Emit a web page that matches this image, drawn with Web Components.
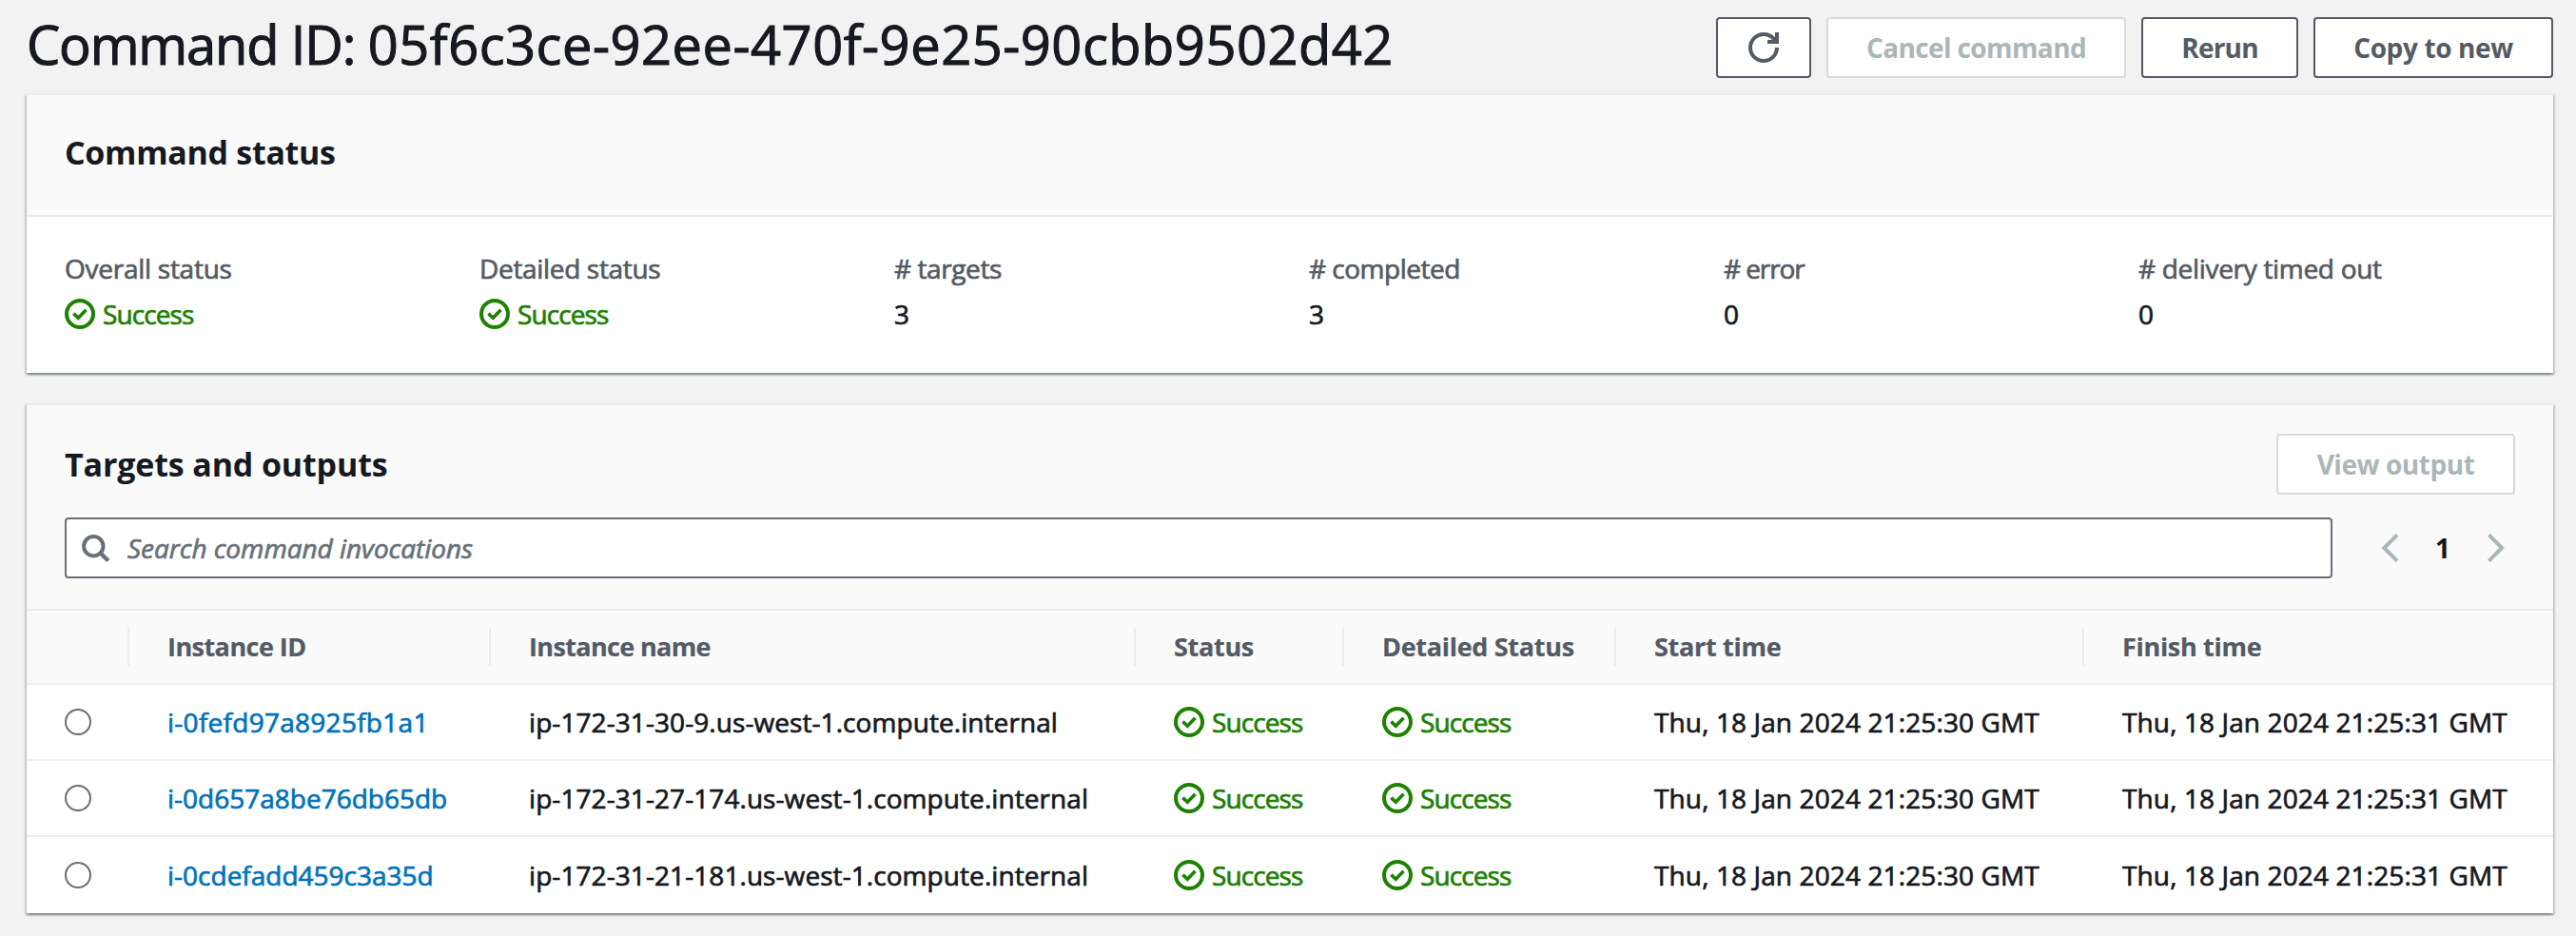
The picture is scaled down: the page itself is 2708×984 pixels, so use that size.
<!DOCTYPE html>
<html lang="en"><head><meta charset="utf-8"><title>Command ID: 05f6c3ce-92ee-470f-9e25-90cbb9502d42</title>
<style>
body{margin:0;background:#f2f2f2;color:#16191f;font:400 28px/44px "Open Sans","Noto Sans",sans-serif;width:2708px;height:984px;overflow:hidden}
</style></head><body>
<command-page></command-page>
<script>
const define=(name,css,html,setup)=>customElements.define(name,class extends HTMLElement{
  connectedCallback(){
    if(this.shadowRoot)return;
    const root=this.attachShadow({mode:'open'});
    root.innerHTML=`<style>*{box-sizing:border-box}${css}</style>${typeof html==='function'?html(this):html}`;
    if(setup)setup(this,root);
  }
});

const icons={
  success:'<circle cx="16" cy="16" r="14" stroke-width="4"/><path d="M9.4 15.6l4.9 4.6 8.2-8.4" stroke-width="3.6"/>',
  refresh:'<path d="M30 16c0 7.74-6.26 14-14 14S2 23.74 2 16 8.26 2 16 2c5.58 0 10.4 3.26 12.66 8" stroke-width="4"/><path d="M20 10h10V0" stroke-width="4"/>',
  search:'<circle cx="14.3" cy="14.2" r="10.2" stroke-width="4"/><path d="M21.4 21.3l8.4 8.2" stroke-width="4.4"/>',
  prev:'<path d="M24 2.4L10.3 16 24 29.6" stroke-width="4"/>',
  next:'<path d="M8.4 2.4L22.1 16 8.4 29.6" stroke-width="4"/>'
};
define('ui-icon',':host{display:block;width:32px;height:32px;flex:none}svg{display:block;fill:none;stroke:currentColor;overflow:visible}',
  el=>`<svg width="32" height="32" viewBox="0 0 32 32">${icons[el.getAttribute('name')]}</svg>`);

define('ui-text',':host{display:inline-block;white-space:nowrap;-webkit-text-stroke:var(--stroke,.7px) currentColor}','<slot></slot>',
  el=>{el.style.letterSpacing=(el.getAttribute('track')||0)+'px'});

define('ui-button',`:host{display:flex;align-items:center;justify-content:center;box-sizing:border-box;height:64px;border:2px solid #545b64;border-radius:4px;background:#fff;color:#545b64;font-weight:700;white-space:nowrap}
:host([disabled]){border-color:#d5dbdb;color:#aab7b8}`,'<slot></slot>',
  el=>{el.style.width=el.getAttribute('width')+'px';el.style.letterSpacing=(el.getAttribute('track')||0)+'px'});

define('ui-status',':host{display:flex;align-items:center;gap:8px;color:#1d8102}','<ui-icon name="success"></ui-icon><ui-text track="-.9"><slot></slot></ui-text>');

define('ui-panel',`:host{display:block;border-top:2px solid #eaeded;background:#fff;box-shadow:0 2px 2px rgba(0,28,36,.3),2px 2px 2px rgba(0,28,36,.15),-2px 2px 2px rgba(0,28,36,.15)}
header{background:#fafafa;border-bottom:2px solid #eaeded}`,'<header><slot name="header"></slot></header><slot></slot>');

define('ui-heading',':host{display:block;font-weight:700;font-size:34px;line-height:36px;white-space:nowrap}','<slot></slot>',
  el=>{el.style.letterSpacing=(el.getAttribute('track')||0)+'px'});

define('key-value',':host{display:block}.k{color:#545b64;margin-bottom:4px}.v{height:44px}',
  el=>`<div class="k"><ui-text track="${el.getAttribute('track')}">${el.getAttribute('label')}</ui-text></div><div class="v"><slot></slot></div>`);

define('search-field',`:host{display:flex;align-items:center;gap:18px;box-sizing:border-box;height:64px;border:2px solid #687078;border-radius:4px;background:#fff;padding:0 14px;color:#687078;font-style:italic}`,
  '<ui-icon name="search"></ui-icon><ui-text track="-.05"><slot></slot></ui-text>');

define('page-nav',':host{display:flex;align-items:center;box-sizing:border-box;width:192px;padding:0 4px 0 44px;color:#aab7b8}b{width:80px;text-align:center;color:#16191f}',
  '<ui-icon name="prev"></ui-icon><b>1</b><ui-icon name="next"></ui-icon>');

const columns=[['Instance ID',-.55],['Instance name',-.65],['Status',-.3],['Detailed Status',-.3],['Start time',-.3],['Finish time',-.3]];
const rows=[['i-0fefd97a8925fb1a1',.27,'ip-172-31-30-9.us-west-1.compute.internal'],
  ['i-0d657a8be76db65db',0,'ip-172-31-27-174.us-west-1.compute.internal'],
  ['i-0cdefadd459c3a35d',0,'ip-172-31-21-181.us-west-1.compute.internal']];
define('targets-table',`:host{display:block}
.r{display:grid;grid-template-columns:108px 380px 678px 219px 286px 492px 493px;align-items:center;height:80px;border-bottom:2px solid #eaeded}
.r:last-child{border-bottom:0}
.r>*{padding-left:40px}
.h{height:78px;background:#fafafa;color:#545b64;font-weight:700;font-size:27px;--stroke:.2px}
.h>*{height:40px;line-height:40px;border-right:2px solid #eaeded}
.h>:last-child{border-right:0}
i{display:block;width:28px;height:28px;border:2px solid #687078;border-radius:50%;background:#fff}
a{color:#0073bb}`,
  ()=>`<div class="r h"><span></span>${columns.map(c=>`<span><ui-text track="${c[1]}">${c[0]}</ui-text></span>`).join('')}</div>`+
  rows.map(r=>`<div class="r"><span><i></i></span><a><ui-text track="${r[1]}">${r[0]}</ui-text></a><span><ui-text track=".07">${r[2]}</ui-text></span><span><ui-status>Success</ui-status></span><span><ui-status>Success</ui-status></span><span><ui-text track=".12">Thu, 18 Jan 2024 21:25:30 GMT</ui-text></span><span><ui-text track=".12">Thu, 18 Jan 2024 21:25:31 GMT</ui-text></span></div>`).join(''));

define('command-page',`:host{display:block;padding:0 24px 0 28px}
.top{display:flex;justify-content:space-between;height:98px}
h1{margin:14px 0 0 0;font-weight:400;font-size:56px;line-height:64px;letter-spacing:-1.15px;white-space:nowrap;-webkit-text-stroke:1.1px currentColor}
h1 span{letter-spacing:.53px}
.actions{display:flex;gap:16px;padding-top:18px}
ui-panel+ui-panel{margin-top:32px}
.sh{padding:42px 40px 48px}
.kv{display:grid;grid-template-columns:repeat(6,436px);padding:32px 0 40px 40px}
.th{padding:30px 40px 32px}
.line{display:flex;justify-content:space-between;align-items:center}
.line+.line{margin-top:24px}
search-field{width:2384px}`,
`<div class="top"><h1>Command ID: <span>05f6c3ce-92ee-470f-9e25-90cbb9502d42</span></h1><div class="actions">
<ui-button width="100"><ui-icon name="refresh"></ui-icon></ui-button>
<ui-button width="315" track="-.61" disabled>Cancel command</ui-button>
<ui-button width="165" track="-.79">Rerun</ui-button>
<ui-button width="252" track="-.38">Copy to new</ui-button></div></div>
<ui-panel><div slot="header" class="sh"><ui-heading track="-.3">Command status</ui-heading></div>
<div class="kv">
<key-value label="Overall status" track="-.26"><ui-status>Success</ui-status></key-value>
<key-value label="Detailed status" track="-.33"><ui-status>Success</ui-status></key-value>
<key-value label="# targets" track="-.41"><ui-text>3</ui-text></key-value>
<key-value label="# completed" track="-.5"><ui-text>3</ui-text></key-value>
<key-value label="# error" track="-1.1"><ui-text>0</ui-text></key-value>
<key-value label="# delivery timed out" track="-.31"><ui-text>0</ui-text></key-value>
</div></ui-panel>
<ui-panel><div slot="header" class="th">
<div class="line"><ui-heading track="-.15">Targets and outputs</ui-heading><ui-button width="251" track="-.45" disabled>View output</ui-button></div>
<div class="line"><search-field>Search command invocations</search-field><page-nav></page-nav></div></div>
<targets-table></targets-table></ui-panel>`);
</script></body></html>
